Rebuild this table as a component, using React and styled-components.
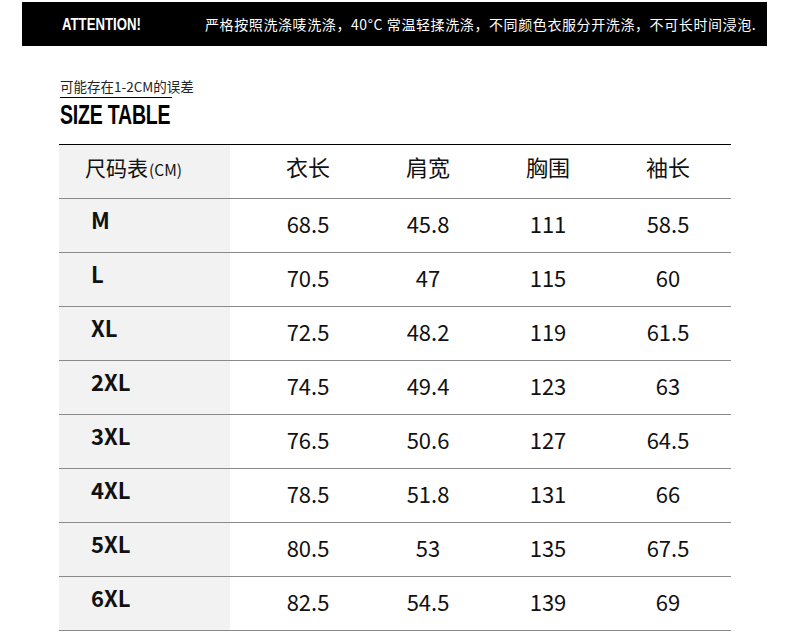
import styled, { createGlobalStyle } from "styled-components";

const SIZES = [
  { size: "M", values: ["68.5", "45.8", "111", "58.5"] },
  { size: "L", values: ["70.5", "47", "115", "60"] },
  { size: "XL", values: ["72.5", "48.2", "119", "61.5"] },
  { size: "2XL", values: ["74.5", "49.4", "123", "63"] },
  { size: "3XL", values: ["76.5", "50.6", "127", "64.5"] },
  { size: "4XL", values: ["78.5", "51.8", "131", "66"] },
  { size: "5XL", values: ["80.5", "53", "135", "67.5"] },
  { size: "6XL", values: ["82.5", "54.5", "139", "69"] },
];

const COLUMNS = ["衣长", "肩宽", "胸围", "袖长"];

const App = () => (
  <Page>
    <GlobalStyle />
    <Banner>
      <BannerTitle>ATTENTION!</BannerTitle>
      <BannerText>严格按照洗涤唛洗涤，40°C 常温轻揉洗涤，不同颜色衣服分开洗涤，不可长时间浸泡.</BannerText>
    </Banner>
    <Content>
      <Note>可能存在1-2CM的误差</Note>
      <Rule />
      <Title>SIZE TABLE</Title>
      <Table>
        <Row>
          <SizeCell $header>
            <span>
              尺码表<Unit>(CM)</Unit>
            </span>
          </SizeCell>
          <Values>
            {COLUMNS.map((col) => (
              <HeadCell key={col}>{col}</HeadCell>
            ))}
          </Values>
        </Row>
        {SIZES.map(({ size, values }) => (
          <Row key={size}>
            <SizeCell>{size}</SizeCell>
            <Values>
              {values.map((v, i) => (
                <ValueCell key={i}>{v}</ValueCell>
              ))}
            </Values>
          </Row>
        ))}
      </Table>
    </Content>
  </Page>
);

const GlobalStyle = createGlobalStyle`
  body {
    margin: 0;
    background: #ffffff;
  }
`;

const CJK = `"Noto Sans CJK SC", "Noto Sans", sans-serif`;
const CONDENSED = `"Liberation Sans", Arial, sans-serif`;

const Page = styled.div`
  width: 790px;
  height: 642px;
  padding-top: 2px;
  box-sizing: border-box;
  font-family: ${CJK};
  color: #111;
`;

const Banner = styled.div`
  display: flex;
  align-items: center;
  width: 745px;
  height: 44px;
  margin-left: 22px;
  padding-left: 40px;
  box-sizing: border-box;
  background: #000;
  color: #fff;
`;

const BannerTitle = styled.span`
  width: 143px;
  flex-shrink: 0;
  font-family: ${CONDENSED};
  font-weight: 700;
  font-size: 16.5px;
  transform: scaleX(0.8);
  transform-origin: left center;
`;

const BannerText = styled.span`
  font-size: 14px;
  letter-spacing: 0.6px;
  white-space: nowrap;
`;

const Content = styled.div`
  display: flex;
  flex-direction: column;
  align-items: flex-start;
  padding: 30px 0 0 59px;
`;

const Note = styled.div`
  font-size: 13.5px;
  line-height: 20px;
  color: #222;
  margin-left: 1px;
`;

const Rule = styled.div`
  width: 112px;
  height: 1px;
  margin: 1px 0 0 1px;
  background: #000;
`;

const Title = styled.div`
  margin-left: 1px;
  margin-top: 3px;
  font-family: ${CONDENSED};
  font-weight: 700;
  font-size: 27.5px;
  line-height: 28px;
  letter-spacing: -0.3px;
  color: #000;
  transform: scaleX(0.71);
  transform-origin: left top;
`;

const Table = styled.div`
  margin-top: 15px;
  width: 672px;
  border-top: 1px solid #000;
`;

const Row = styled.div`
  display: flex;
  height: 53px;
  border-bottom: 1px solid #8a8a8a;
`;

const SizeCell = styled.div`
  display: flex;
  align-items: center;
  width: 171px;
  flex-shrink: 0;
  box-sizing: border-box;
  background: #f2f2f2;
  padding-left: ${(p) => (p.$header ? "26px" : "32px")};
  padding-bottom: ${(p) => (p.$header ? "10px" : "14px")};
  font-size: ${(p) => (p.$header ? "21px" : "22px")};
  font-weight: ${(p) => (p.$header ? 400 : 700)};
  color: #111;
`;

const Unit = styled.span`
  font-size: 15.5px;
  margin-left: 1px;
`;

const Values = styled.div`
  flex: 1;
  display: grid;
  grid-template-columns: repeat(4, 120px);
  padding-left: 18px;
`;

const HeadCell = styled.div`
  display: flex;
  align-items: center;
  justify-content: center;
  padding-bottom: 11px;
  font-size: 22px;
  color: #111;
`;

const ValueCell = styled.div`
  display: flex;
  align-items: center;
  justify-content: center;
  padding-bottom: 6px;
  font-size: 22px;
  color: #111;
`;

export default App;
